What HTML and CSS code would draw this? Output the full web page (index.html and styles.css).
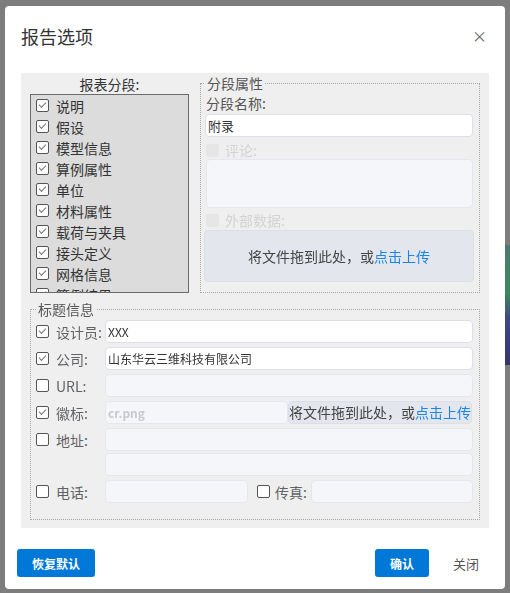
FILE: index.html
```html
<!DOCTYPE html>
<html lang="zh-CN">
<head>
    <meta charset="UTF-8">
    <meta name="viewport" content="width=device-width, initial-scale=1.0">
    <title>报告选项</title>
    <link rel="stylesheet" href="styles.css">
</head>
<body>
    <div class="scene-model"></div>

    <div class="modal">
        <div class="modal-header">
            <h3 class="modal-title">报告选项</h3>
            <span class="close">×</span>
        </div>

        <div class="panel">
            <div class="top-row">
                <div class="sections">
                    <div class="sections-title">报表分段:</div>
                    <ul class="section-list">
                        <li><span class="cb checked"></span>说明</li>
                        <li><span class="cb checked"></span>假设</li>
                        <li><span class="cb checked"></span>模型信息</li>
                        <li><span class="cb checked"></span>算例属性</li>
                        <li><span class="cb checked"></span>单位</li>
                        <li><span class="cb checked"></span>材料属性</li>
                        <li><span class="cb checked"></span>载荷与夹具</li>
                        <li><span class="cb checked"></span>接头定义</li>
                        <li><span class="cb checked"></span>网格信息</li>
                        <li><span class="cb checked"></span>算例结果</li>
                    </ul>
                </div>

                <fieldset class="group props">
                    <legend>分段属性</legend>
                    <div class="field-label">分段名称:</div>
                    <input class="input name-input" type="text" value="附录">
                    <div class="check-line off"><span class="cb disabled"></span>评论:</div>
                    <div class="input area-input"></div>
                    <div class="check-line off"><span class="cb disabled"></span>外部数据:</div>
                    <div class="upload big">将文件拖到此处，或<em>点击上传</em></div>
                </fieldset>
            </div>

            <fieldset class="group title-info">
                <legend>标题信息</legend>

                <div class="row">
                    <span class="cb checked"></span>
                    <span class="row-label">设计员:</span>
                    <input class="input" type="text" value="XXX">
                </div>
                <div class="row">
                    <span class="cb checked"></span>
                    <span class="row-label">公司:</span>
                    <input class="input" type="text" value="山东华云三维科技有限公司">
                </div>
                <div class="row">
                    <span class="cb"></span>
                    <span class="row-label">URL:</span>
                    <div class="input disabled"></div>
                </div>
                <div class="row">
                    <span class="cb checked"></span>
                    <span class="row-label">徽标:</span>
                    <div class="logo-field">
                        <div class="input disabled placeholder">cr.png</div>
                        <div class="upload small">将文件拖到此处，或<em>点击上传</em></div>
                    </div>
                </div>
                <div class="row tight">
                    <span class="cb"></span>
                    <span class="row-label">地址:</span>
                    <div class="input disabled"></div>
                </div>
                <div class="row">
                    <span></span>
                    <span></span>
                    <div class="input disabled"></div>
                </div>
                <div class="row">
                    <span class="cb"></span>
                    <span class="row-label">电话:</span>
                    <div class="split">
                        <div class="input disabled phone"></div>
                        <span class="cb"></span>
                        <span class="row-label short">传真:</span>
                        <div class="input disabled fax"></div>
                    </div>
                </div>
            </fieldset>
        </div>

        <div class="modal-footer">
            <button class="btn primary">恢复默认</button>
            <div class="footer-right">
                <button class="btn primary narrow">确认</button>
                <button class="btn text">关闭</button>
            </div>
        </div>
    </div>
</body>
</html>
```

FILE: styles.css
```css
body {
    margin: 0;
    height: 593px;
    overflow: hidden;
    position: relative;
    background-color: #7d7d7d;
    font-family: "Noto Sans CJK SC", "Noto Sans", sans-serif;
    color: #333;
}
.scene-model {
    position: absolute;
    left: 498px;
    top: 245px;
    width: 14px;
    height: 120px;
    background: linear-gradient(#3f7a70, #2d8a55 40%, #2c3f86 60%, #22226a);
    opacity: 0.8;
}
.modal {
    position: relative;
    margin: 6px 0 0 5px;
    width: 500px;
    height: 583px;
    background-color: white;
    border-radius: 4px;
    display: flex;
    flex-direction: column;
}
.modal-header {
    height: 67px;
    box-sizing: border-box;
    padding: 18px 18px 0 16px;
    display: flex;
    justify-content: space-between;
    align-items: flex-start;
}
.modal-title {
    margin: 0;
    font-size: 18px;
    line-height: 24px;
    font-weight: normal;
    color: #333;
}
.close {
    font-size: 15px;
    line-height: 24px;
    color: #666;
}
.panel {
    margin: 0 16px;
    height: 455px;
    box-sizing: border-box;
    padding: 0 9px;
    background-color: #efefef;
}
.top-row {
    display: flex;
    align-items: flex-start;
    gap: 11px;
}
.sections {
    width: 159px;
    padding-top: 2px;
}
.sections-title {
    text-align: center;
    font-size: 14px;
    line-height: 19px;
    color: #333;
}
.section-list {
    list-style: none;
    margin: 0;
    padding: 0 0 44px;
    height: 199px;
    box-sizing: border-box;
    border: 1px solid #6b6b6b;
    background-color: #dcdcdc;
    overflow-y: scroll;
}
.section-list::-webkit-scrollbar {
    width: 5px;
}
.section-list::-webkit-scrollbar-track {
    background-color: #fff;
}
.section-list::-webkit-scrollbar-thumb {
    background-color: #c2c2c2;
}
.section-list li {
    height: 21px;
    display: flex;
    align-items: center;
    gap: 7px;
    padding-left: 5px;
    font-size: 14px;
    line-height: 18px;
    color: #333;
}
.cb {
    position: relative;
    flex: none;
    width: 13px;
    height: 13px;
    box-sizing: border-box;
    border: 1px solid #555;
    border-radius: 2px;
    background-color: white;
}
.cb.checked::after {
    content: "";
    position: absolute;
    left: 2px;
    top: 2px;
    width: 6px;
    height: 3px;
    border-left: 1px solid #777;
    border-bottom: 1px solid #777;
    transform: rotate(-45deg);
}
.cb.disabled {
    border-color: #e6e6e6;
    background-color: #e6e6e6;
}
.group {
    margin: 0;
    border: 1px dotted #a9a9a9;
    min-width: 0;
}
.group legend {
    padding: 0 2px;
    font-size: 14px;
    line-height: 14px;
    color: #555;
}
.props {
    width: 280px;
    box-sizing: border-box;
    margin-top: 3px;
    padding: 4px 6px 10px 4px;
}
.field-label {
    font-size: 14px;
    line-height: 18px;
    color: #555;
    padding-left: 1px;
}
.input {
    display: block;
    width: 100%;
    height: 23px;
    box-sizing: border-box;
    margin: 0;
    padding: 0 2px;
    border: 1px solid #dcdfe6;
    border-radius: 4px;
    background-color: white;
    font-family: inherit;
    font-size: 12px;
    color: #333;
    outline: none;
}
.name-input {
    margin-top: 2px;
    font-size: 13px;
}
.check-line {
    height: 18px;
    display: flex;
    align-items: center;
    gap: 6px;
    padding-left: 1px;
    font-size: 14px;
    line-height: 18px;
}
.check-line.off {
    color: #d3d3d3;
}
.props .check-line:nth-of-type(2) {
    margin-top: 4px;
}
.area-input {
    height: 49px;
    margin-left: 1px;
    width: calc(100% - 1px);
    background-color: #f5f6f9;
    border-color: #e4e7ed;
}
.props .check-line + .upload {
    margin-top: 1px;
}
.area-input + .check-line {
    margin-top: 3px;
}
.upload {
    box-sizing: border-box;
    border: 1px solid #dcdfe6;
    border-radius: 4px;
    background-color: #e3e6ed;
    font-size: 14px;
    color: #444;
    white-space: nowrap;
}
.upload em {
    font-style: normal;
    color: #1a86e8;
}
.upload.big {
    height: 52px;
    margin-left: -1px;
    width: calc(100% + 2px);
    display: flex;
    align-items: center;
    justify-content: center;
}
.title-info {
    margin-top: 9px;
    padding: 4px 6px 16px 5px;
}
.row {
    display: grid;
    grid-template-columns: 20px 49px 1fr;
    align-items: center;
    height: 23px;
    margin-bottom: 4px;
}
.row:last-child {
    margin-bottom: 0;
}
.row.tight {
    margin-bottom: 2px;
}
.row-label {
    font-size: 14px;
    line-height: 18px;
    color: #606266;
    white-space: nowrap;
}
.input.disabled {
    background-color: #f5f6f9;
    border-color: #e4e7ed;
}
.placeholder {
    line-height: 21px;
    font-weight: bold;
    color: #c6c9d0;
}
.logo-field {
    display: flex;
    height: 23px;
}
.logo-field .input {
    width: 183px;
    flex: none;
}
.upload.small {
    width: 184px;
    height: 23px;
    line-height: 21px;
    overflow: hidden;
}
.split {
    display: flex;
    align-items: center;
}
.split .phone {
    width: 143px;
    flex: none;
    margin-right: 9px;
}
.row-label.short {
    margin-left: 5px;
    width: 36px;
}
.split .fax {
    flex: 1;
}
.modal-footer {
    flex: 1;
    display: flex;
    justify-content: space-between;
    align-items: flex-start;
    padding: 21px 12px 0 12px;
}
.footer-right {
    display: flex;
    gap: 10px;
}
.btn {
    height: 28px;
    border: none;
    border-radius: 3px;
    font-family: inherit;
    font-size: 12px;
    cursor: pointer;
}
.btn.primary {
    width: 78px;
    background-color: #0078d7;
    color: white;
    font-weight: bold;
}
.btn.narrow {
    width: 54px;
}
.btn.text {
    width: 54px;
    background: none;
    color: #555;
    font-size: 13px;
}
```
